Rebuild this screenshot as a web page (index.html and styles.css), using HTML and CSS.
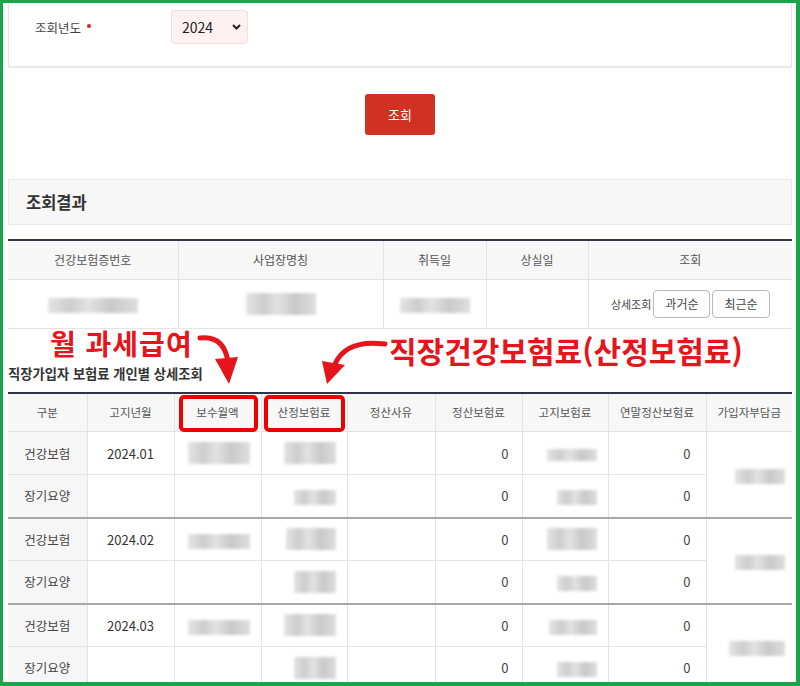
FILE: index.html
```html
<!DOCTYPE html>
<html lang="ko">
<head>
<meta charset="utf-8">
<title>직장가입자 보험료 조회</title>
<link rel="stylesheet" href="styles.css">
</head>
<body>
<div class="frame">
  <div class="page">
    <section class="search-panel">
      <div class="field-label">조회년도<span class="req"></span></div>
      <div class="select">
        <span>2024</span>
        <svg class="chev" width="9" height="6" viewBox="0 0 9 6"><path d="M1 1 L4.5 4.5 L8 1" fill="none" stroke="#222" stroke-width="2"/></svg>
      </div>
    </section>

    <div class="actions"><button class="btn-search">조회</button></div>

    <div class="result-head">조회결과</div>

    <table class="tbl tbl-info">
      <colgroup><col class="c1"><col class="c2"><col class="c3"><col class="c4"><col class="c5"></colgroup>
      <thead>
        <tr><th>건강보험증번호</th><th>사업장명칭</th><th>취득일</th><th>상실일</th><th>조회</th></tr>
      </thead>
      <tbody>
        <tr>
          <td class="center"><span class="blur b90"></span></td>
          <td class="center"><span class="blur b70 tall"></span></td>
          <td class="center"><span class="blur b70"></span></td>
          <td></td>
          <td class="center"><span class="detail-label">상세조회</span><button class="btn-sm">과거순</button><button class="btn-sm">최근순</button></td>
        </tr>
      </tbody>
    </table>

    <section class="detail">
      <div class="annot annot-1">월 과세급여</div>
      <div class="annot annot-2">직장건강보험료(산정보험료)</div>
      <svg class="arrows" width="784" height="64" viewBox="0 0 784 64">
        <path d="M192 9 Q216 6 220 33" fill="none" stroke="#e5151b" stroke-width="5" stroke-linecap="round"/>
        <polygon points="207,30 230,28 221,55" fill="#e5151b"/>
        <path d="M377 15 Q338 10 327 35" fill="none" stroke="#e5151b" stroke-width="5" stroke-linecap="round"/>
        <polygon points="314,32 337,36 319,55" fill="#e5151b"/>
      </svg>
      <h3 class="caption">직장가입자 보험료 개인별 상세조회</h3>

      <table class="tbl tbl-detail">
        <colgroup>
          <col class="d1"><col class="d2"><col class="d3"><col class="d4"><col class="d5"><col class="d6"><col class="d7"><col class="d8"><col class="d9">
        </colgroup>
        <thead>
          <tr>
            <th>구분</th><th>고지년월</th><th class="mark mark-a">보수월액</th><th class="mark mark-b">산정보험료</th><th>정산사유</th><th>정산보험료</th><th>고지보험료</th><th>연말정산보험료</th><th>가입자부담금</th>
          </tr>
        </thead>
        <tbody>
          <tr>
            <td class="kind">건강보험</td><td class="center">2024.01</td>
            <td class="right"><span class="blur b62 tall"></span></td>
            <td class="right"><span class="blur b52 tall"></span></td>
            <td></td><td class="num">0</td>
            <td class="right"><span class="blur b50 thin"></span></td>
            <td class="num num2">0</td>
            <td class="right end" rowspan="2"><span class="blur b50"></span></td>
          </tr>
          <tr class="group-end">
            <td class="kind">장기요양</td><td></td><td></td>
            <td class="right"><span class="blur b42"></span></td>
            <td></td><td class="num">0</td>
            <td class="right"><span class="blur b40"></span></td>
            <td class="num num2">0</td>
          </tr>
          <tr>
            <td class="kind">건강보험</td><td class="center">2024.02</td>
            <td class="right"><span class="blur b62"></span></td>
            <td class="right"><span class="blur b50 tall"></span></td>
            <td></td><td class="num">0</td>
            <td class="right"><span class="blur b50 tall"></span></td>
            <td class="num num2">0</td>
            <td class="right end" rowspan="2"><span class="blur b50"></span></td>
          </tr>
          <tr class="group-end">
            <td class="kind">장기요양</td><td></td><td></td>
            <td class="right"><span class="blur b42 tall"></span></td>
            <td></td><td class="num">0</td>
            <td class="right"><span class="blur b40"></span></td>
            <td class="num num2">0</td>
          </tr>
          <tr>
            <td class="kind">건강보험</td><td class="center">2024.03</td>
            <td class="right"><span class="blur b62"></span></td>
            <td class="right"><span class="blur b52 tall"></span></td>
            <td></td><td class="num">0</td>
            <td class="right"><span class="blur b48"></span></td>
            <td class="num num2">0</td>
            <td class="right end" rowspan="2"><span class="blur b56"></span></td>
          </tr>
          <tr class="group-end">
            <td class="kind">장기요양</td><td></td><td></td>
            <td class="right"><span class="blur b42 tall"></span></td>
            <td></td><td class="num">0</td>
            <td class="right"><span class="blur b40"></span></td>
            <td class="num num2">0</td>
          </tr>
        </tbody>
      </table>
    </section>
  </div>
</div>
</body>
</html>
```

FILE: styles.css
```css
* { box-sizing: border-box; margin: 0; padding: 0; }
html, body { background: #fff; }
body {
  margin: 0;
  font-family: "Noto Sans CJK KR", "Noto Sans", sans-serif;
  color: #333;
}
.frame {
  width: 800px;
  height: 686px;
  border: 3px solid #19a64a;
  border-right-width: 4px;
  border-bottom-width: 4px;
  overflow: hidden;
  position: relative;
  background: #fff;
}
.page { padding: 0 4px 0 5px; }

/* search panel */
.search-panel {
  margin-top: -4px;
  border: 1px solid #e6e6e6;
  box-shadow: 0 1px 1px #ededed;
  padding: 10px 0 22px 26px;
  display: flex;
  align-items: center;
}
.field-label { width: 136px; font-size: 12.5px; color: #444; display: flex; align-items: center; }
.req {
  display: inline-block;
  width: 4px;
  height: 4px;
  border-radius: 50%;
  background: #d3291d;
  margin-left: 6px;
  margin-top: -3px;
}
.select {
  width: 77px;
  height: 34px;
  background: #fdf1f1;
  border: 1px solid #f3dcdc;
  border-radius: 4px;
  display: flex;
  align-items: center;
  justify-content: space-between;
  padding: 0 6px 0 10px;
  font-size: 14px;
  color: #222;
}
.actions { display: flex; justify-content: center; padding: 27px 0 44px; }
.btn-search {
  width: 70px;
  height: 41px;
  background: #cf3122;
  color: #fff;
  border: 0;
  border-radius: 3px;
  font: 13px "Noto Sans CJK KR", sans-serif;
}
.result-head {
  height: 46px;
  background: #f7f7f7;
  border: 1px solid #e8e8e8;
  display: flex;
  align-items: center;
  padding-left: 17px;
  font-size: 16.5px;
  font-weight: 700;
  color: #333;
}

/* tables */
.tbl {
  width: 100%;
  table-layout: fixed;
  border-collapse: collapse;
  border-top: 2px solid #2f3548;
}
.tbl th {
  background: #f7f7f7;
  font-size: 11.5px;
  font-weight: 400;
  color: #555;
  border-bottom: 1px solid #e3e3e3;
  border-left: 1px solid #e3e3e3;
  text-align: center;
  vertical-align: middle;
}
.tbl td {
  border-bottom: 1px solid #e3e3e3;
  border-left: 1px solid #e3e3e3;
  font-size: 13px;
  color: #333;
  vertical-align: middle;
}
.tbl th:first-child, .tbl td:first-child { border-left: 0; }
.center { text-align: center; }
.right { text-align: right; padding-right: 11px; }

.tbl-info { margin-top: 14px; }
.tbl-info .c1 { width: 170px; }
.tbl-info .c2 { width: 205px; }
.tbl-info .c3 { width: 103px; }
.tbl-info .c4 { width: 102px; }
.tbl-info .c5 { width: 204px; }
.tbl-info th { height: 39px; font-size: 12px; }
.tbl-info td { height: 49px; }
.detail-label { font-size: 11px; color: #444; vertical-align: middle; }
.btn-sm {
  height: 28px;
  padding: 0 11px;
  margin-left: 2px;
  background: #fff;
  border: 1px solid #b9b9b9;
  border-radius: 4px;
  font: 12px "Noto Sans CJK KR", sans-serif;
  color: #444;
  vertical-align: middle;
}

/* blurred values */
.blur {
  display: inline-block;
  vertical-align: middle;
  height: 15px;
  background: linear-gradient(90deg, #e4e4e4 0%, #cdcdcd 25%, #e2e2e2 45%, #c9c9c9 70%, #dedede 100%);
  filter: blur(1.6px);
}
.blur.tall { height: 22px; }
.blur.thin { height: 12px; }
.b90 { width: 90px; }
.b70 { width: 70px; }
.b62 { width: 62px; }
.b56 { width: 56px; }
.b52 { width: 52px; }
.b50 { width: 50px; }
.b48 { width: 48px; }
.b42 { width: 42px; }
.b40 { width: 40px; }

/* detail section */
.detail { position: relative; padding-top: 36px; }
.caption {
  font-size: 13.3px;
  font-weight: 700;
  line-height: 18px;
  color: #333;
  margin-bottom: 9px;
}
.annot {
  position: absolute;
  color: #e5151b;
  font-weight: 700;
  line-height: 1;
  white-space: nowrap;
}
.annot-1 { left: 42px; top: 0; font-size: 28px; letter-spacing: 1px; }
.annot-2 { left: 381px; top: 6px; font-size: 30px; }
.arrows { position: absolute; left: 0; top: 0; }

.tbl-detail .d1 { width: 79px; }
.tbl-detail .d2 { width: 87px; }
.tbl-detail .d3 { width: 87px; }
.tbl-detail .d4 { width: 86px; }
.tbl-detail .d5 { width: 88px; }
.tbl-detail .d6 { width: 87px; }
.tbl-detail .d7 { width: 86px; }
.tbl-detail .d8 { width: 98px; }
.tbl-detail .d9 { width: 86px; }
.tbl-detail th { height: 39px; }
.tbl-detail td { height: 43px; }
.tbl-detail td.kind { background: #f6f6f6; text-align: center; font-size: 12.5px; color: #444; }
.tbl-detail td.num { text-align: right; padding-right: 13px; color: #444; }
.tbl-detail td.num2 { padding-right: 15px; }
.tbl-detail td.end { padding-right: 7px; }
.tbl-detail tr.group-end td, .tbl-detail td.end { border-bottom: 2px solid #a8a8a8; }

.mark { position: relative; }
.mark::after {
  content: "";
  position: absolute;
  top: 1px;
  bottom: -1px;
  border: 4px solid #ee0000;
  border-radius: 5px;
}
.mark-a::after { left: 4px; right: 3px; }
.mark-b::after { left: 2px; right: 2px; }
```
